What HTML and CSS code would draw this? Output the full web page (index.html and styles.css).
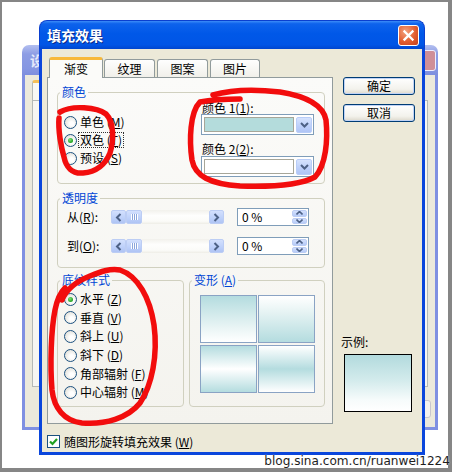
FILE: index.html
```html
<!DOCTYPE html>
<html>
<head>
<meta charset="utf-8">
<title>填充效果</title>
<link rel="stylesheet" href="styles.css">
</head>
<body>
<div class="screen">

  <div class="back">
    <div class="back-title"><span class="back-title-text">设</span><span class="back-close"></span></div>
    <div class="back-body">
      <div class="back-tabs"><span class="back-tab"></span></div>
      <div class="back-panel"></div>
      <div class="back-foot"><span class="back-btn"></span></div>
    </div>
  </div>

  <div class="main">
    <div class="titlebar">
      <span class="title-text">填充效果</span>
      <span class="close-btn"><svg width="19" height="19" viewBox="0 0 19 19"><path d="M5.5 5.5 L13.5 13.5 M13.5 5.5 L5.5 13.5" stroke="#fff" stroke-width="2.3" stroke-linecap="square"/></svg></span>
    </div>
    <div class="dlg-body">
      <div class="dlg-row">
        <div class="tabs-col">
          <div class="tabs">
            <div class="tab active">渐变</div>
            <div class="tab t2">纹理</div>
            <div class="tab t3">图案</div>
            <div class="tab t4">图片</div>
          </div>
          <div class="panel">
            <fieldset class="grp grp-color">
              <legend>颜色</legend>
              <div class="color-grid">
                <div class="radios">
                  <div class="radio"><span class="rb"></span><span class="rl">单色 (<u>M</u>)</span></div>
                  <div class="radio"><span class="rb on"></span><span class="rl focus">双色 (<u>T</u>)</span></div>
                  <div class="radio"><span class="rb"></span><span class="rl">预设 (<u>S</u>)</span></div>
                </div>
                <div class="combos">
                  <div class="clabel">颜色 1(<u>1</u>):</div>
                  <div class="combo c1"><span class="swatch teal"></span><span class="dd"><svg width="9" height="6" viewBox="0 0 9 6"><path d="M1 1 L4.5 4.5 L8 1" fill="none" stroke="#4d6185" stroke-width="2"/></svg></span></div>
                  <div class="clabel l2">颜色 2(<u>2</u>):</div>
                  <div class="combo c2"><span class="swatch"></span><span class="dd"><svg width="9" height="6" viewBox="0 0 9 6"><path d="M1 1 L4.5 4.5 L8 1" fill="none" stroke="#4d6185" stroke-width="2"/></svg></span></div>
                </div>
              </div>
            </fieldset>

            <fieldset class="grp grp-trans">
              <legend>透明度</legend>
              <div class="trow">
                <span class="tlabel">从(<u>R</u>):</span>
                <div class="hscroll">
                  <span class="sb-btn"><svg width="7" height="9" viewBox="0 0 7 9"><path d="M5.5 1 L2 4.5 L5.5 8" fill="none" stroke="#4d6185" stroke-width="2"/></svg></span>
                  <span class="sb-thumb"><svg width="7" height="6" viewBox="0 0 7 6"><path d="M0.5 0 V6 M2.5 0 V6 M4.5 0 V6 M6.5 0 V6" stroke="#ffffff" stroke-width="1"/><path d="M1.5 0 V6 M3.5 0 V6 M5.5 0 V6" stroke="#8ca6dc" stroke-width="1"/></svg></span>
                  <span class="sb-track"></span>
                  <span class="sb-btn"><svg width="7" height="9" viewBox="0 0 7 9"><path d="M1.5 1 L5 4.5 L1.5 8" fill="none" stroke="#4d6185" stroke-width="2"/></svg></span>
                </div>
                <div class="spin"><span class="spin-val">0 %</span><span class="spin-btns"><span class="sp"><svg width="7" height="4" viewBox="0 0 7 4"><path d="M0.5 3.5 L3.5 0.5 L6.5 3.5" fill="none" stroke="#4d6185" stroke-width="1.6"/></svg></span><span class="sp"><svg width="7" height="4" viewBox="0 0 7 4"><path d="M0.5 0.5 L3.5 3.5 L6.5 0.5" fill="none" stroke="#4d6185" stroke-width="1.6"/></svg></span></span></div>
              </div>
              <div class="trow r2">
                <span class="tlabel">到(<u>O</u>):</span>
                <div class="hscroll">
                  <span class="sb-btn"><svg width="7" height="9" viewBox="0 0 7 9"><path d="M5.5 1 L2 4.5 L5.5 8" fill="none" stroke="#4d6185" stroke-width="2"/></svg></span>
                  <span class="sb-thumb"><svg width="7" height="6" viewBox="0 0 7 6"><path d="M0.5 0 V6 M2.5 0 V6 M4.5 0 V6 M6.5 0 V6" stroke="#ffffff" stroke-width="1"/><path d="M1.5 0 V6 M3.5 0 V6 M5.5 0 V6" stroke="#8ca6dc" stroke-width="1"/></svg></span>
                  <span class="sb-track"></span>
                  <span class="sb-btn"><svg width="7" height="9" viewBox="0 0 7 9"><path d="M1.5 1 L5 4.5 L1.5 8" fill="none" stroke="#4d6185" stroke-width="2"/></svg></span>
                </div>
                <div class="spin"><span class="spin-val">0 %</span><span class="spin-btns"><span class="sp"><svg width="7" height="4" viewBox="0 0 7 4"><path d="M0.5 3.5 L3.5 0.5 L6.5 3.5" fill="none" stroke="#4d6185" stroke-width="1.6"/></svg></span><span class="sp"><svg width="7" height="4" viewBox="0 0 7 4"><path d="M0.5 0.5 L3.5 3.5 L6.5 0.5" fill="none" stroke="#4d6185" stroke-width="1.6"/></svg></span></span></div>
              </div>
            </fieldset>

            <div class="grp-row">
              <fieldset class="grp grp-style">
                <legend>底纹样式</legend>
                <div class="radio"><span class="rb on"></span><span class="rl">水平 (<u>Z</u>)</span></div>
                <div class="radio"><span class="rb"></span><span class="rl">垂直 (<u>V</u>)</span></div>
                <div class="radio"><span class="rb"></span><span class="rl">斜上 (<u>U</u>)</span></div>
                <div class="radio"><span class="rb"></span><span class="rl">斜下 (<u>D</u>)</span></div>
                <div class="radio"><span class="rb"></span><span class="rl">角部辐射 (<u>F</u>)</span></div>
                <div class="radio"><span class="rb"></span><span class="rl">中心辐射 (<u>M</u>)</span></div>
              </fieldset>
              <fieldset class="grp grp-variant">
                <legend>变形 (<u>A</u>)</legend>
                <div class="tiles">
                  <span class="tile v1"></span>
                  <span class="tile v2"></span>
                  <span class="tile v3"></span>
                  <span class="tile v4"></span>
                </div>
              </fieldset>
            </div>
          </div>
        </div>
        <div class="side">
          <button class="btn default">确定</button>
          <button class="btn">取消</button>
          <div class="sample-label">示例:</div>
          <div class="sample"></div>
        </div>
      </div>
      <div class="check-row">
        <span class="cb"><svg width="11" height="11" viewBox="0 0 11 11"><path d="M2 5.5 L4.5 8 L9 3" fill="none" stroke="#21a121" stroke-width="2.2"/></svg></span>
        <span class="cl">随图形旋转填充效果 (<u>W</u>)</span>
      </div>
    </div>
  </div>

  <div class="watermark">blog.sina.com.cn/ruanwei1224</div>

  <svg class="marks" width="452" height="472" viewBox="0 0 452 472">
    <g fill="none" stroke="#f20d0d" stroke-width="5.5" stroke-linecap="round" stroke-linejoin="round">
      <path d="M60 112 C72 105, 97 107, 106 114 C114 122, 114 140, 110 153 C105 165, 96 172, 83 173 C72 174, 66 167, 64 157 C61 147, 58 130, 59 118"/>
      <path d="M240 99 C225 99, 210 100, 200 102 C190 112, 189 140, 192 160 C195 176, 210 184, 240 186 C270 187, 300 185, 315 177 C326 165, 328 140, 326 120 C323 104, 305 96, 280 92 C255 89, 230 90, 213 95"/>
      <path d="M62 300 C66 290, 75 282, 90 276 C100 272, 110 268, 120 270 C138 276, 150 298, 154 325 C158 355, 152 385, 140 403 C128 418, 105 425, 82 423 C64 421, 54 408, 52 390 C50 365, 51 330, 55 310 C57 300, 60 293, 65 288"/>
    </g>
  </svg>
</div>
</body>
</html>
```
FILE: styles.css
```css
* { box-sizing: border-box; }
html, body { margin: 0; padding: 0; }
body {
  width: 452px; height: 472px; overflow: hidden; background: #fff;
  font-family: "Noto Sans CJK SC", "Liberation Sans", sans-serif;
  font-size: 12px; color: #000;
}
u { text-decoration: underline; text-underline-offset: 1px; }

.screen {
  position: relative; width: 452px; height: 472px;
  border-style: solid; border-color: #868686; border-width: 2px 4px 4px 2px;
  background: #fff;
}

/* ---------- background window ---------- */
.back {
  position: absolute; left: 20px; top: 43px; width: 416px; height: 385px;
  display: flex; flex-direction: column;
}
.back-title {
  height: 30px; flex: none; display: flex; align-items: center; justify-content: space-between;
  padding: 0 2px 0 8px; border-radius: 7px 7px 0 0;
  background: linear-gradient(#b3bff0, #8d9de4 30%, #8596e2 80%, #7d8ede);
}
.back-title-text { color: #e4e9fb; font-weight: bold; font-size: 14px; line-height: 16px; }
.back-close {
  width: 21px; height: 21px; border: 1px solid #eef; border-radius: 3px;
  background: #cf8f98;
}
.back-body {
  flex: 1; display: flex; flex-direction: column; background: #ebe9dc;
  border: 3px solid #7f90e2; border-top: 0; padding: 5px 7px 0 7px;
}
.back-tabs { height: 20px; flex: none; }
.back-tab {
  display: block; width: 60px; height: 20px; border: 1px solid #b5b9b6; border-bottom: 0;
  border-top: 3px solid #f4c058; background: #f8f8f4; border-radius: 3px 3px 0 0;
}
.back-panel { height: 287px; border: 1px solid #b5b9b6; background: #f7f6f2; }
.back-foot { flex: 1; display: flex; justify-content: flex-end; align-items: flex-start; padding-top: 13px; }
.back-btn {
  width: 70px; height: 18px; margin-right: -3px; border: 1px solid #c8c6cc; border-radius: 3px; background: #f4f3ef;
}

/* ---------- main window ---------- */
.main {
  position: absolute; left: 37px; top: 18px; width: 386px; height: 435px;
  display: flex; flex-direction: column;
}
.titlebar {
  height: 29px; flex: none; display: flex; align-items: center; justify-content: space-between;
  padding: 0 5px 0 7px; border-radius: 8px 8px 0 0;
  background: linear-gradient(#3c8cf8 0%, #0d62ec 10%, #0058e8 45%, #0055e6 85%, #0046cf 100%);
  border: 1px solid #0a3fcf; border-bottom: 0;
}
.title-text {
  color: #fff; font-weight: bold; font-size: 14px; line-height: 16px;
  text-shadow: 1px 1px 0 #0a2a8a;
}
.close-btn {
  width: 21px; height: 21px; display: flex; align-items: center; justify-content: center;
  border: 1px solid #fff; border-radius: 3px;
  background: radial-gradient(circle at 35% 30%, #f3a27f 0%, #e25d2f 55%, #c43f1d 100%);
}

.dlg-body {
  flex: 1; display: flex; flex-direction: column; background: #ece9d8;
  border: 3px solid #0a46dc; border-top: 0; padding: 8px 7px 2px 5px;
}
.dlg-row { display: flex; gap: 10px; }
.tabs-col { width: 286px; flex: none; display: flex; flex-direction: column; }

.tabs { height: 20px; display: flex; align-items: flex-end; padding-left: 2px; }
.tab {
  height: 18px; width: 51px; text-align: center; line-height: 17px; font-size: 12px;
  border: 1px solid #919b9c; border-bottom: 0; border-radius: 3px 3px 0 0;
  background: linear-gradient(#fefefe, #f1f0ea);
}
.tab.active {
  width: 54px; height: 21px; margin-bottom: -1px; position: relative; z-index: 2;
  border-top: 3px solid #f7b83a; background: #fbfbf9; line-height: 17px;
}
.tab.t2 { margin-left: 1px; }
.tab.t3 { margin-left: 2px; }
.tab.t4 { margin-left: 2px; width: 50px; }

.panel {
  height: 347px; border: 1px solid #919b9c; background: linear-gradient(#fbfbf9, #f4f3ee);
  padding: 7px 7px 0 9px;
}

.grp {
  margin: 0; min-width: 0; border: 1px solid #d0d0bf; border-radius: 4px;
}
.grp legend {
  color: #0046d5; font-size: 12px; line-height: 14px; padding: 0 2px;
}
.grp-color { height: 99px; padding: 1px 0 0 6px; }
.grp-color legend, .grp-style legend { margin-left: -4px; }
.grp-trans legend { margin-left: -7px; }
.grp-variant legend { margin-left: -8px; }
.color-grid { display: flex; }
.radios { width: 137px; padding-top: 13px; }
.radio { display: flex; align-items: center; height: 18px; gap: 3px; }
.grp-style .radio { height: 18.6px; }
.rl { line-height: 14px; white-space: nowrap; }
.rl.focus { outline: 1px dotted #333; outline-offset: 0; padding: 0 1px; margin-left: -1px; }
.rb {
  width: 13px; height: 13px; flex: none; border-radius: 50%; border: 1px solid #1c5180;
  background: radial-gradient(circle at 60% 60%, #ffffff 20%, #e6e5df 70%, #d4d2c8);
  display: flex; align-items: center; justify-content: center;
}
.rb.on::after {
  content: ""; width: 5px; height: 5px; border-radius: 50%;
  background: radial-gradient(circle at 40% 35%, #7fe37a, #21a121 70%);
}

.combos { width: 113px; }
.clabel { line-height: 13px; padding-left: 1px; margin-top: 1px; white-space: nowrap; }
.clabel.l2 { margin-top: 7px; }
.combo {
  height: 21px; border: 1px solid #7f9db9; background: #fff; display: flex; gap: 2px;
  padding: 2px 1px 1px 2px;
}
.c2 { margin-top: 1px; }
.swatch { flex: 1; border: 1px solid #a7a699; background: #fff; margin-bottom: 1px; }
.swatch.teal { background: #b4dcdc; }
.dd {
  width: 16px; flex: none; display: flex; align-items: center; justify-content: center;
  border: 1px solid #b9cdf8; border-radius: 2px;
  background: linear-gradient(#d6e3fe, #bccffa 60%, #b0c5f6);
}

.grp-trans { height: 77px; margin-top: 7px; padding: 3px 0 0 9px; }
.trow { display: flex; align-items: center; height: 18px; }
.trow.r2 { margin-top: 11px; }
.tlabel { width: 44px; flex: none; line-height: 14px; }
.hscroll { width: 113px; height: 14px; display: flex; flex: none; }
.sb-btn, .sb-thumb {
  display: flex; align-items: center; justify-content: center; flex: none;
  border: 1px solid #bccdf4; border-radius: 2px;
  background: linear-gradient(#d3e0fd, #bdd0fa 60%, #afc4f4);
}
.sb-btn { width: 15px; }
.sb-thumb { width: 16px; }
.sb-track { flex: 1; background: linear-gradient(#f2f1ec, #fefefd 40%, #fbfbf8 80%, #eeede6); }
.spin {
  width: 72px; height: 18px; margin-left: 13px; border: 1px solid #7f9db9; background: #fff;
  display: flex; align-items: stretch; padding: 1px;
}
.spin-val { flex: 1; line-height: 14px; padding-left: 3px; }
.spin-btns { width: 15px; display: flex; flex-direction: column; gap: 1px; }
.sp {
  flex: 1; display: flex; align-items: center; justify-content: center;
  border: 1px solid #bccdf4; border-radius: 2px;
  background: linear-gradient(#d3e0fd, #b6cbf8);
}

.grp-row { display: flex; gap: 5px; margin-top: 5px; }
.grp-style { width: 127px; height: 134px; padding: 3px 0 0 6px; }
.grp-variant { width: 136px; height: 134px; padding: 8px 0 0 10px; }
.tiles { display: grid; grid-template-columns: 57px 57px; grid-template-rows: 48px 48px; gap: 2px 1px; }
.tile { border: 1px solid #8aa3c4; }
.v1 { background: linear-gradient(#b4dcdf, #eaf5f5 70%, #ffffff); }
.v2 { background: linear-gradient(#ffffff, #eaf5f5 30%, #b4dcdf); }
.v3 { background: linear-gradient(#b4dcdf, #ffffff 50%, #b4dcdf); }
.v4 { background: linear-gradient(#ffffff, #b4dcdf 50%, #ffffff); }

.side { width: 72px; flex: none; display: flex; flex-direction: column; padding-top: 20px; }
.btn {
  height: 18px; width: 72px; padding: 0; margin: 0; font: inherit; line-height: 14px; color: #000;
  border: 1px solid #003c74; border-radius: 3px;
  background: linear-gradient(#ffffff, #f3f2ec 70%, #dcd8cb);
  box-shadow: inset 0 0 0 1px #c0d3f6;
}
.btn + .btn { margin-top: 9px; }
.sample-label { margin-top: 213px; margin-left: -2px; line-height: 14px; }
.sample {
  margin-top: 5px; margin-left: 1px; width: 68px; height: 58px; border: 1px solid #000;
  background: linear-gradient(#b2dadd 0%, #d3ebec 45%, #f6fbfb 80%, #ffffff 100%);
}

.check-row { display: flex; align-items: center; gap: 4px; margin-top: 11px; height: 13px; }
.cb {
  width: 13px; height: 13px; flex: none; border: 1px solid #1c5180; background: #fff;
  display: flex; align-items: center; justify-content: center;
}
.cl { line-height: 14px; white-space: nowrap; }

/* ---------- overlays ---------- */
.watermark {
  position: absolute; right: -2px; top: 451px;
  font-family: "DejaVu Sans", "Liberation Sans", sans-serif; font-size: 12.1px; line-height: 16px;
  color: #1e1e1e; text-shadow: 0 0 2px #fff;
}
.marks { position: absolute; left: -2px; top: -2px; pointer-events: none; z-index: 10; }
```
